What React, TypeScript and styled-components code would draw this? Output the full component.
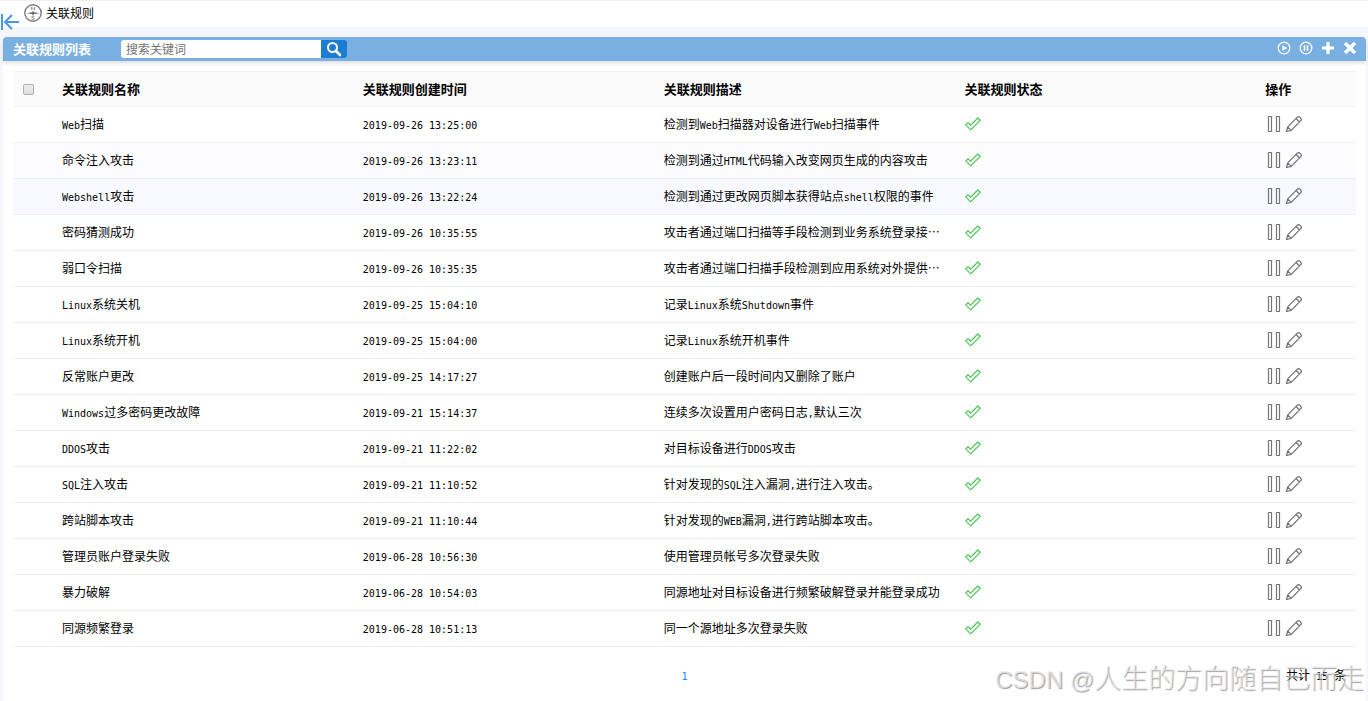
import React, { useState } from 'react';
import styled, { createGlobalStyle } from 'styled-components';

const GlobalStyle = createGlobalStyle`
  * { box-sizing: border-box; }
  body {
    margin: 0;
    background: #f6f7fc;
    color: #000;
    font-family: "Noto Sans CJK SC", sans-serif;
    font-size: 12px;
    line-height: 16px;
  }
  button, input { font-family: inherit; }
`;

const Page = styled.div`
  position: relative;
  min-height: 100vh;
  display: flex;
  flex-direction: column;
`;

const TopBar = styled.header`
  display: flex;
  align-items: center;
  gap: 4px;
  height: 27px;
  padding: 0 0 2px 24px;
  background: #fff;
  border-top: 1px solid #f1f1f3;
`;

const PageTitle = styled.h1`
  margin: 0;
  font-size: 12px;
  font-weight: 400;
`;

const CollapseButton = styled.button`
  position: absolute;
  top: 13px;
  left: 0;
  padding: 0;
  border: 0;
  background: none;
  line-height: 0;
  cursor: pointer;
`;

const Panel = styled.main`
  flex: 1;
  margin: 10px 2px 0 3px;
  background: #fff;
  border-radius: 4px 4px 0 0;
`;

const PanelBar = styled.div`
  display: flex;
  align-items: center;
  height: 24px;
  padding: 0 9px 0 10px;
  background: #79afe1;
  border-radius: 4px 4px 0 0;
  box-shadow: 0 2px 4px rgba(0, 0, 0, 0.14);
`;

const PanelTitle = styled.h2`
  width: 108px;
  margin: 0;
  color: #fff;
  font-size: 13px;
  font-weight: 700;
`;

const SearchForm = styled.form`
  display: flex;
  flex: 1;
  height: 18px;
`;

const SearchInput = styled.input`
  width: 200px;
  height: 18px;
  padding: 0 5px 2px;
  border: 0;
  border-radius: 3px 0 0 3px;
  background: #fff;
  font-size: 12px;
  outline: 0;
  &::placeholder { color: #757575; opacity: 1; }
`;

const SearchButton = styled.button`
  display: flex;
  align-items: center;
  justify-content: center;
  width: 26px;
  height: 18px;
  padding: 0;
  border: 0;
  border-radius: 0 3px 3px 0;
  background: #1c7cd2;
`;

const BarActions = styled.div`
  display: flex;
  gap: 8px;
  padding-bottom: 2px;
`;

const IconButton = styled.button`
  display: block;
  padding: 0;
  border: 0;
  background: none;
  line-height: 0;
  cursor: pointer;
`;

const Table = styled.table`
  width: calc(100% - 20px);
  margin: 10px 10px 0;
  border-collapse: collapse;
  table-layout: fixed;
`;

const Column = styled.col<{ $width?: string }>`
  width: ${(p) => p.$width ?? 'auto'};
`;

const HeadRow = styled.tr`
  height: 35px;
  background: #fbfbfb;
  border-top: 1px solid #f2f2f2;
  border-bottom: 1px solid #f2f2f2;
`;

const HeadCell = styled.th`
  padding: 0 10px;
  text-align: left;
  font-size: 13px;
  font-weight: 700;
`;

const Row = styled.tr<{ $tone: string }>`
  height: 36px;
  background: ${(p) => p.$tone};
  border-bottom: 1px solid #f0f0f0;
`;

const Cell = styled.td`
  padding: 0 10px 2px;
  overflow: hidden;
  white-space: nowrap;
  line-height: 16px;
`;

const Half = styled.span`
  font-family: "DejaVu Sans Mono", monospace;
  font-size: 10px;
  line-height: 0;
`;

const CheckBox = styled.input`
  display: block;
  appearance: none;
  width: 11px;
  height: 11px;
  margin: 0;
  border: 1px solid #b0b0b0;
  border-radius: 2px;
  background: linear-gradient(#ededed, #dedede);
  &:checked { background: #1c7cd2; }
`;

const Status = styled.span`
  display: flex;
  padding-left: 1px;
`;

const RowActions = styled.div`
  display: flex;
  gap: 4px;
  padding-left: 2px;
`;

const Footer = styled.footer`
  display: grid;
  grid-template-columns: 1fr auto 1fr;
  align-items: center;
  padding: 20px 20px 16px;
`;

const PageLink = styled.a`
  grid-column: 2;
  color: #1c86ee;
  text-decoration: none;
`;

const Total = styled.span`
  justify-self: end;
`;

const Watermark = styled.div`
  position: absolute;
  right: 4px;
  bottom: 6px;
  color: rgba(236, 236, 236, 0.7);
  font-size: 27px;
  font-weight: 300;
  line-height: 36px;
  text-shadow: 1px 1px 1px rgba(0, 0, 0, 0.38);
  white-space: nowrap;
  pointer-events: none;
`;

const WatermarkLatin = styled.span`
  font-family: "Liberation Sans", sans-serif;
  font-size: 24px;
  line-height: 0;
`;

type Rule = [name: string, time: string, description: string];

const rules: Rule[] = [
  ['Web扫描', '2019-09-26 13:25:00', '检测到Web扫描器对设备进行Web扫描事件'],
  ['命令注入攻击', '2019-09-26 13:23:11', '检测到通过HTML代码输入改变网页生成的内容攻击'],
  ['Webshell攻击', '2019-09-26 13:22:24', '检测到通过更改网页脚本获得站点shell权限的事件'],
  ['密码猜测成功', '2019-09-26 10:35:55', '攻击者通过端口扫描等手段检测到业务系统登录接…'],
  ['弱口令扫描', '2019-09-26 10:35:35', '攻击者通过端口扫描手段检测到应用系统对外提供…'],
  ['Linux系统关机', '2019-09-25 15:04:10', '记录Linux系统Shutdown事件'],
  ['Linux系统开机', '2019-09-25 15:04:00', '记录Linux系统开机事件'],
  ['反常账户更改', '2019-09-25 14:17:27', '创建账户后一段时间内又删除了账户'],
  ['Windows过多密码更改故障', '2019-09-21 15:14:37', '连续多次设置用户密码日志,默认三次'],
  ['DDOS攻击', '2019-09-21 11:22:02', '对目标设备进行DDOS攻击'],
  ['SQL注入攻击', '2019-09-21 11:10:52', '针对发现的SQL注入漏洞,进行注入攻击。'],
  ['跨站脚本攻击', '2019-09-21 11:10:44', '针对发现的WEB漏洞,进行跨站脚本攻击。'],
  ['管理员账户登录失败', '2019-06-28 10:56:30', '使用管理员帐号多次登录失败'],
  ['暴力破解', '2019-06-28 10:54:03', '同源地址对目标设备进行频繁破解登录并能登录成功'],
  ['同源频繁登录', '2019-06-28 10:51:13', '同一个源地址多次登录失败'],
];

const rowTones: Record<number, string> = { 1: '#fcfcff', 2: '#f8f9ff' };

// Sets runs of Latin letters and digits at half the width of a Chinese character.
function Mixed({ text }: { text: string }) {
  return (
    <>
      {text.split(/([\x20-\x7e]+)/).map((run, i) =>
        i % 2 ? <Half key={i}>{run}</Half> : run,
      )}
    </>
  );
}

const CompassIcon = () => (
  <svg width="18" height="18" viewBox="0 0 18 18" fill="none" stroke="#7c7c7c">
    <circle cx="9" cy="9" r="8.2" strokeWidth="1.4" />
    <path d="M2.500 9.200L8 8.200l1-1.200 1 1.200 5.500 1-5.500.8-1 1.500-1-1.500z" fill="#666" stroke="none" />
    <path d="M7.400 6V3l3.200 3V3M10.500 12.700c-.6-.8-2.900-.7-2.900.3 0 1.100 3 .7 3 1.800 0 .9-2.600.9-3.200 0" strokeWidth="0.8" />
  </svg>
);

const CollapseIcon = () => (
  <svg width="20" height="18" viewBox="0 0 20 18" fill="none" stroke="#4a98e4" strokeWidth="2">
    <path d="M2 1v16M19 9H5.500M12 2L5 9l7 7" />
  </svg>
);

const SearchIcon = () => (
  <svg width="16" height="16" viewBox="0 0 16 16" fill="none" stroke="#fff">
    <circle cx="6.500" cy="6.500" r="4.500" strokeWidth="2" />
    <path d="M10 10l4 4" strokeWidth="2.600" strokeLinecap="round" />
  </svg>
);

const PlayIcon = () => (
  <svg width="14" height="14" viewBox="0 0 14 14" fill="none" stroke="#fff">
    <circle cx="7" cy="7" r="5.800" strokeWidth="1.300" />
    <path d="M5.300 3.900L10.200 7l-4.900 3.100z" fill="#fff" stroke="none" />
  </svg>
);

const PauseCircleIcon = () => (
  <svg width="14" height="14" viewBox="0 0 14 14" fill="none" stroke="#fff">
    <circle cx="7" cy="7" r="5.800" strokeWidth="1.300" />
    <path d="M5.500 4.200v5.600M8.500 4.200v5.600" strokeWidth="1.600" />
  </svg>
);

const PlusIcon = () => (
  <svg width="14" height="14" viewBox="0 0 14 14" stroke="#fff" strokeWidth="3.200">
    <path d="M7 1v12M1 7h12" />
  </svg>
);

const CloseIcon = () => (
  <svg width="14" height="14" viewBox="0 0 14 14" stroke="#fff" strokeWidth="3.600">
    <path d="M2 2l10 10M12 2L2 12" />
  </svg>
);

const CheckIcon = () => (
  <svg width="16" height="16" viewBox="0 0 16 16" fill="none" stroke="#4cc552" strokeWidth="1.200" strokeLinejoin="round" role="img" aria-label="启用">
    <path d="M.8 8.800L3 6.600l2.700 2.600L12.800 2l2.400 2.300-9.500 9.500z" />
  </svg>
);

const PauseIcon = () => (
  <svg width="14" height="18" viewBox="0 0 14 18" fill="none" stroke="#777" strokeWidth="1.200">
    <path d="M1.500 1.500h3v15h-3zM9.500 1.500h3v15h-3z" />
  </svg>
);

const PencilIcon = () => (
  <svg width="18" height="18" viewBox="0 0 18 18" fill="none" stroke="#707070" strokeWidth="1.200" strokeLinejoin="round">
    <path d="M1.500 16.500l1.200-4.700L12.300 2.200c1.800-1.800 5.200 1.600 3.500 3.500L6.200 15.300zM2.700 11.800l3.500 3.500M11 3.500L14.500 7" />
  </svg>
);

export default function App() {
  const [query, setQuery] = useState('');
  return (
    <Page lang="zh-CN">
      <GlobalStyle />
      <TopBar>
        <CompassIcon />
        <PageTitle>关联规则</PageTitle>
      </TopBar>
      <CollapseButton aria-label="收起"><CollapseIcon /></CollapseButton>
      <Panel>
        <PanelBar>
          <PanelTitle>关联规则列表</PanelTitle>
          <SearchForm onSubmit={(e) => e.preventDefault()}>
            <SearchInput
              aria-label="搜索关键词"
              placeholder="搜索关键词"
              value={query}
              onChange={(e) => setQuery(e.target.value)}
            />
            <SearchButton aria-label="搜索"><SearchIcon /></SearchButton>
          </SearchForm>
          <BarActions>
            <IconButton aria-label="启动"><PlayIcon /></IconButton>
            <IconButton aria-label="暂停"><PauseCircleIcon /></IconButton>
            <IconButton aria-label="新增"><PlusIcon /></IconButton>
            <IconButton aria-label="删除"><CloseIcon /></IconButton>
          </BarActions>
        </PanelBar>
        <Table>
          <colgroup>
            <Column $width="39px" />
            <Column $width="22.4%" />
            <Column $width="22.4%" />
            <Column $width="22.4%" />
            <Column $width="22.4%" />
            <Column />
          </colgroup>
          <thead>
            <HeadRow>
              <HeadCell><CheckBox type="checkbox" aria-label="全选" /></HeadCell>
              <HeadCell>关联规则名称</HeadCell>
              <HeadCell>关联规则创建时间</HeadCell>
              <HeadCell>关联规则描述</HeadCell>
              <HeadCell>关联规则状态</HeadCell>
              <HeadCell>操作</HeadCell>
            </HeadRow>
          </thead>
          <tbody>
            {rules.map(([name, time, description], i) => (
              <Row key={time} $tone={rowTones[i] ?? '#fff'}>
                <Cell />
                <Cell><Mixed text={name} /></Cell>
                <Cell><Mixed text={time} /></Cell>
                <Cell><Mixed text={description} /></Cell>
                <Cell><Status><CheckIcon /></Status></Cell>
                <Cell>
                  <RowActions>
                    <IconButton aria-label="暂停规则"><PauseIcon /></IconButton>
                    <IconButton aria-label="编辑规则"><PencilIcon /></IconButton>
                  </RowActions>
                </Cell>
              </Row>
            ))}
          </tbody>
        </Table>
        <Footer>
          <PageLink href="#1"><Half>1</Half></PageLink>
          <Total><Mixed text="共计 15 条" /></Total>
        </Footer>
      </Panel>
      <Watermark><WatermarkLatin>CSDN @</WatermarkLatin>人生的方向随自己而走</Watermark>
    </Page>
  );
}
